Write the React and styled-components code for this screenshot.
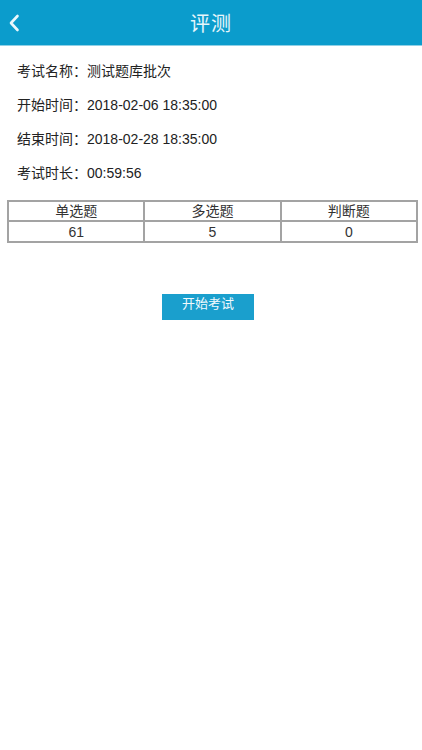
import React from "react";
import styled, { createGlobalStyle } from "styled-components";

const Global = createGlobalStyle`
  html, body { margin: 0; padding: 0; background: #fff; }
  body { font-family: "Liberation Sans", "Noto Sans CJK SC", sans-serif; color: #222; }
`;

const Page = styled.div`
  width: 422px;
  min-height: 750px;
  background: #fff;
`;

const Header = styled.header`
  height: 45px;
  background: #0b9ccc;
  display: flex;
  align-items: center;
  justify-content: center;
  position: relative;
  border-bottom: 1px solid #8fd0e6;
`;

const Back = styled.button`
  position: absolute;
  left: 4px;
  top: 12px;
  width: 20px;
  height: 22px;
  padding: 0;
  border: 0;
  background: none;
  display: flex;
  align-items: center;
  justify-content: center;
`;

const Title = styled.h1`
  margin: 0;
  font-size: 20px;
  font-weight: normal;
  color: #e8f6fb;
  letter-spacing: 1px;
`;

const Info = styled.div`
  padding: 7px 0 0 17px;
  display: flex;
  flex-direction: column;
`;

const Row = styled.div`
  height: 34px;
  display: flex;
  align-items: center;
  font-size: 14px;
  color: #222;
`;

const Table = styled.table`
  margin: 11px 4px 0 7px;
  width: 411px;
  border-collapse: collapse;
  table-layout: fixed;
  font-size: 14px;
  color: #333;
`;

const Cell = styled.td`
  border: 2px solid #a3a3a3;
  text-align: center;
  height: ${(p) => p.$h}px;
  padding: 0;
  line-height: 1;
`;

const ButtonWrap = styled.div`
  display: flex;
  justify-content: center;
  padding-top: 51px;
  padding-right: 6px;
`;

const StartButton = styled.button`
  width: 92px;
  height: 26px;
  border: 0;
  background: #1a9fcd;
  color: #f2fafd;
  font-family: "Liberation Sans", "Noto Sans CJK SC", sans-serif;
  font-size: 13px;
  padding: 0 0 8px;
  line-height: 1;
`;

export default function App() {
  return (
    <Page>
      <Global />
      <Header>
        <Back aria-label="back">
          <svg width="12" height="18" viewBox="0 0 12 18">
            <path d="M9.5 2 L3 9 L9.5 16" fill="none" stroke="#eaf7fc" strokeWidth="2.6" strokeLinecap="round" strokeLinejoin="round" />
          </svg>
        </Back>
        <Title>评测</Title>
      </Header>
      <Info>
        <Row>考试名称：测试题库批次</Row>
        <Row>开始时间：2018-02-06 18:35:00</Row>
        <Row>结束时间：2018-02-28 18:35:00</Row>
        <Row>考试时长：00:59:56</Row>
      </Info>
      <Table>
        <tbody>
          <tr>
            <Cell $h={18}>单选题</Cell>
            <Cell $h={18}>多选题</Cell>
            <Cell $h={18}>判断题</Cell>
          </tr>
          <tr>
            <Cell $h={19}>61</Cell>
            <Cell $h={19}>5</Cell>
            <Cell $h={19}>0</Cell>
          </tr>
        </tbody>
      </Table>
      <ButtonWrap>
        <StartButton>开始考试</StartButton>
      </ButtonWrap>
    </Page>
  );
}
